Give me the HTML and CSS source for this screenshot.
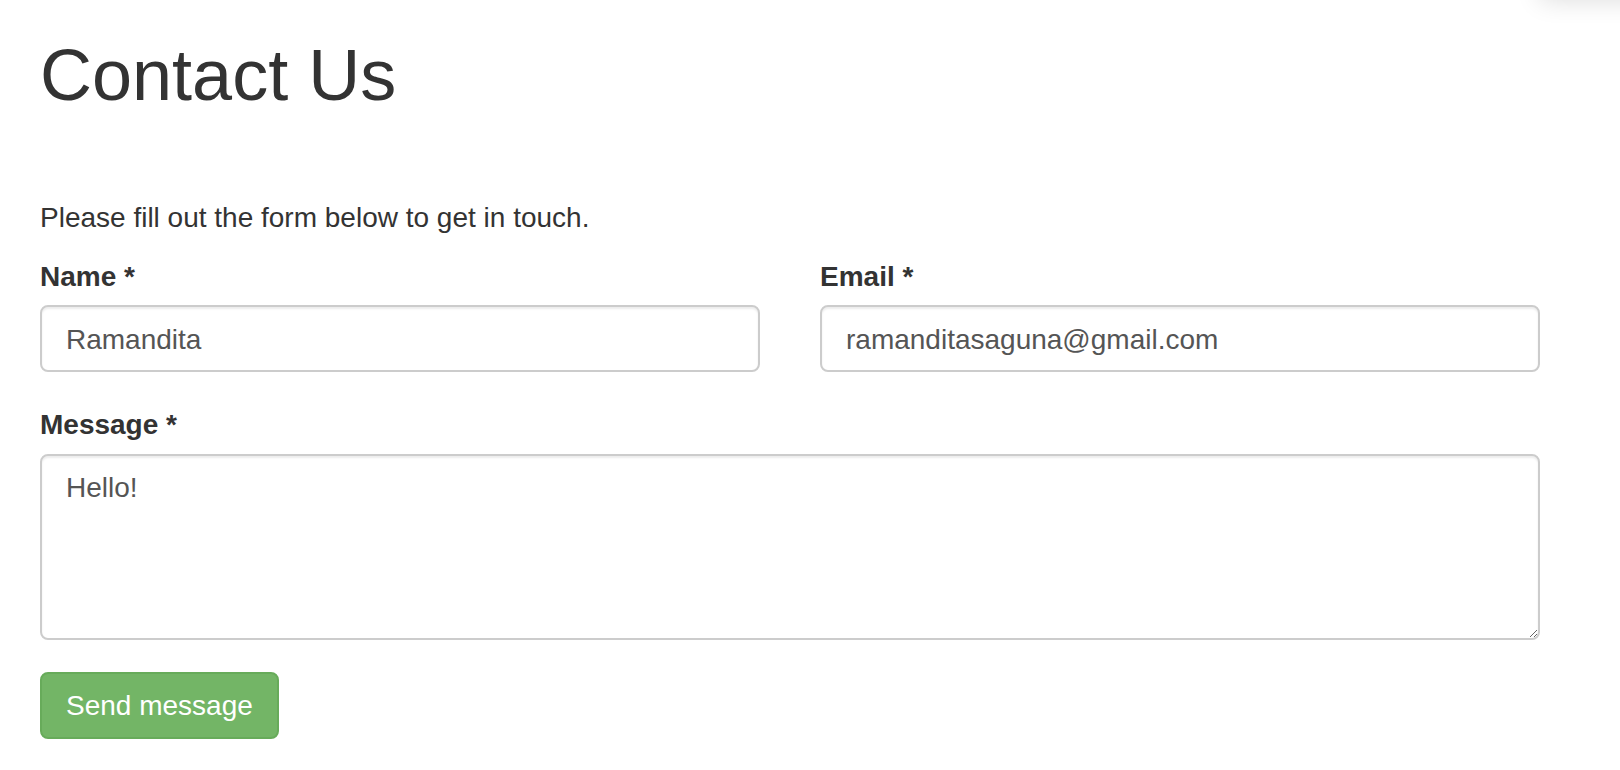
FILE: index.html
```html
<!DOCTYPE html>
<html lang="en">
<head>
<meta charset="utf-8">
<title>Contact Us</title>
<link rel="stylesheet" href="styles.css">
</head>
<body>
<div class="corner-shade"></div>
<div class="container">
  <h1 class="title">Contact Us</h1>
  <p class="intro">Please fill out the form below to get in touch.</p>
  <form class="contact-form">
    <div class="form-row">
      <div class="form-group">
        <label class="field-label" for="name">Name *</label>
        <input class="form-control" id="name" type="text" value="Ramandita">
      </div>
      <div class="form-group">
        <label class="field-label" for="email">Email *</label>
        <input class="form-control" id="email" type="email" value="ramanditasaguna@gmail.com">
      </div>
    </div>
    <div class="form-group message-group">
      <label class="field-label" for="message">Message *</label>
      <textarea class="form-control textarea" id="message">Hello!</textarea>
    </div>
    <button class="btn-send" type="button">Send message</button>
  </form>
</div>
</body>
</html>
```

FILE: styles.css
```css
* {
  box-sizing: border-box;
}

html, body {
  margin: 0;
  padding: 0;
  background: #fff;
}

body {
  font-family: "Liberation Sans", Arial, Helvetica, sans-serif;
  font-size: 28px;
  line-height: 40px;
  color: #333;
}

.corner-shade {
  position: fixed;
  top: -34px;
  right: -30px;
  width: 110px;
  height: 34px;
  background: #fff;
  box-shadow: 0 0 26px rgba(0, 0, 0, 0.14);
}

.container {
  width: 1500px;
  margin-left: 40px;
}

.title {
  margin: 36px 0 83px;
  font-size: 72px;
  line-height: 79px;
  font-weight: normal;
  color: #333;
}

.intro {
  margin: 0 0 19px;
}

.form-row {
  display: grid;
  grid-template-columns: 1fr 1fr;
  column-gap: 60px;
}

.form-group {
  margin-bottom: 33px;
}

.message-group {
  margin-bottom: 32px;
}

.field-label {
  display: block;
  font-weight: bold;
  margin-bottom: 8px;
}

.message-group .field-label {
  margin-bottom: 9px;
}

.form-control {
  display: block;
  width: 100%;
  height: 67px;
  padding: 3px 24px 0;
  font-family: "Liberation Sans", Arial, Helvetica, sans-serif;
  font-size: 28px;
  line-height: 40px;
  color: #555;
  background: #fff;
  border: 2px solid #ccc;
  border-radius: 8px;
  box-shadow: inset 0 2px 2px rgba(0, 0, 0, 0.075);
  outline: none;
}

.textarea {
  height: 186px;
  padding: 12px 24px;
  resize: vertical;
}

.btn-send {
  display: block;
  height: 67px;
  padding: 1px 24px 0;
  font-family: "Liberation Sans", Arial, Helvetica, sans-serif;
  font-size: 28px;
  line-height: 40px;
  color: #fff;
  background: #73b566;
  border: 2px solid #67ab5a;
  border-radius: 8px;
  cursor: pointer;
}
```
